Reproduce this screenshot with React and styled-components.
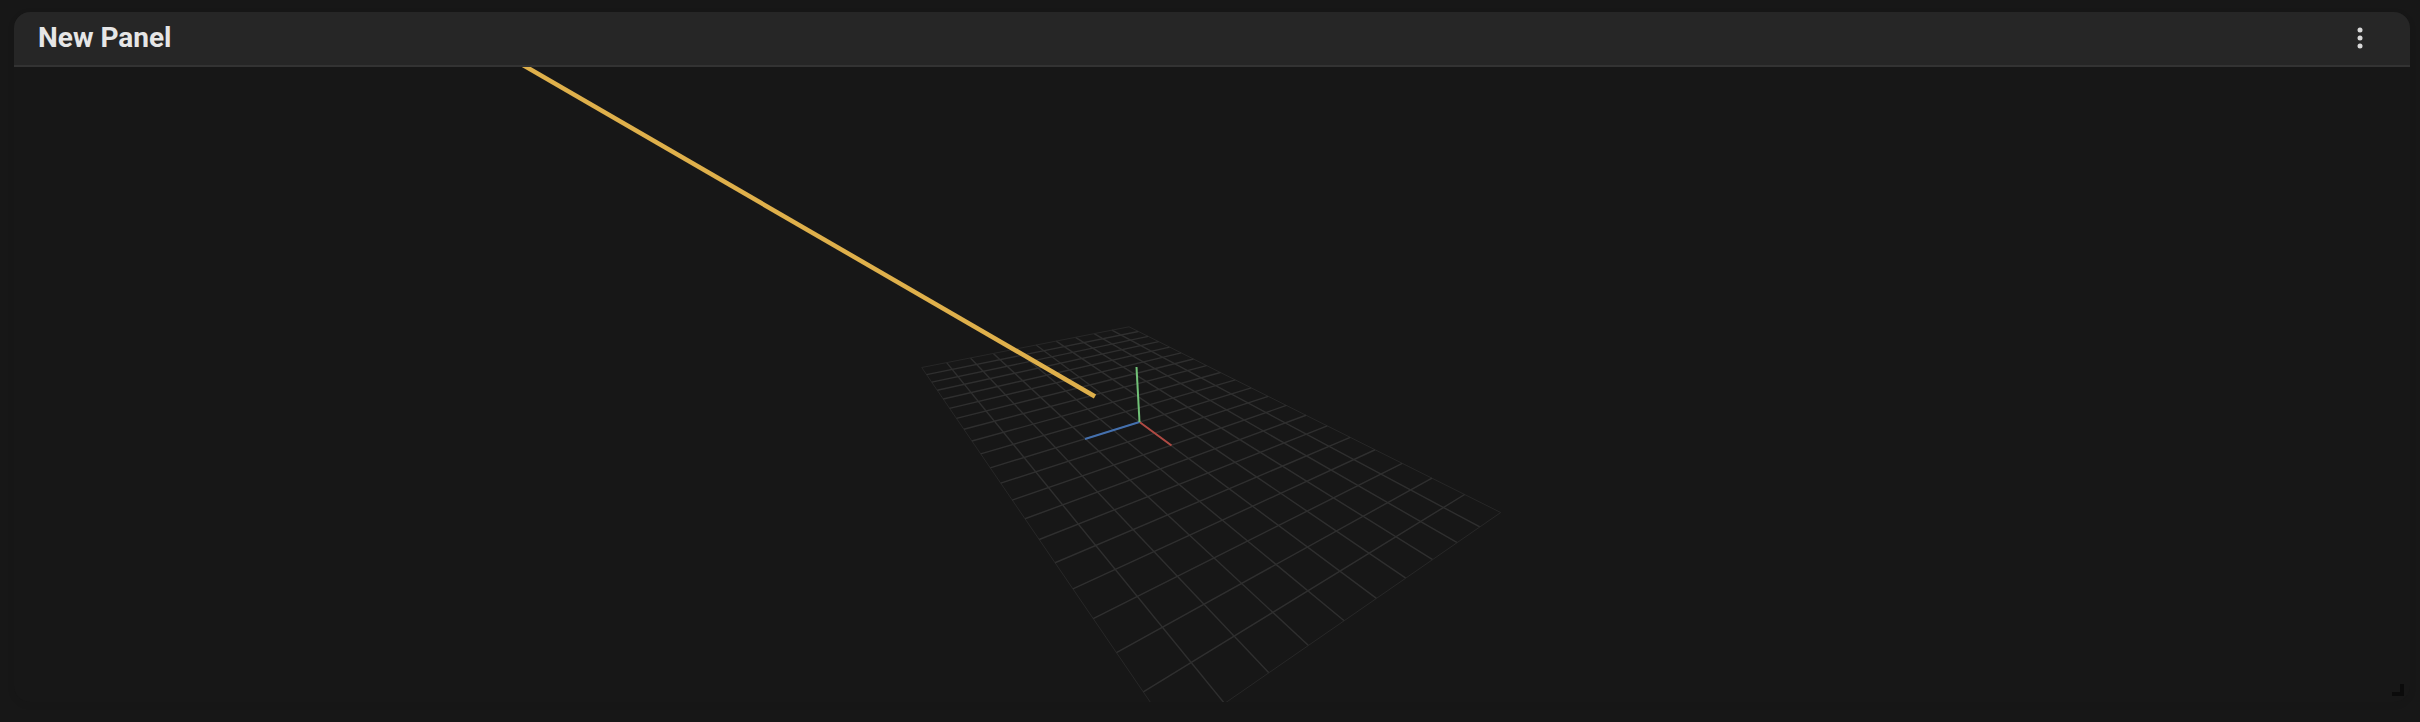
import React from "react";
import styled, { createGlobalStyle } from "styled-components";

const GlobalStyle = createGlobalStyle`
  * {
    box-sizing: border-box;
  }
  body {
    margin: 0;
    background: #171717;
    font-family: Roboto, "Liberation Sans", sans-serif;
  }
`;

const Page = styled.main`
  display: flex;
  min-height: 100vh;
  padding: 12px 10px 20px 14px;
`;

const StyledPanel = styled.section`
  position: relative;
  display: flex;
  flex: 1;
  flex-direction: column;
  min-width: 0;
  overflow: hidden;
  border-radius: 16px;
  background: #171717;
  box-shadow: 0 2px 8px rgba(0, 0, 0, 0.06);
`;

const Header = styled.header`
  display: flex;
  align-items: flex-start;
  justify-content: space-between;
  height: 55px;
  padding: 10px 34px 0 24px;
  background: #262626;
  border-bottom: 2px solid #333333;
`;

const Title = styled.h2`
  margin: 0;
  color: #e6e6e6;
  font-size: 28px;
  font-weight: 700;
  line-height: 32px;
`;

const MenuButton = styled.button`
  display: grid;
  place-items: center;
  width: 32px;
  height: 32px;
  padding: 0;
  border: 0;
  background: none;
  color: #d9d9d9;
  cursor: pointer;
`;

const Viewport = styled.div`
  display: flex;
  flex: 1;
  min-height: 0;
`;

const Scene = styled.svg`
  display: block;
  flex: 1;
  width: 100%;
  min-width: 0;
`;

const ResizeHandle = styled.span`
  position: absolute;
  right: 6px;
  bottom: 6px;
  width: 12px;
  height: 12px;
  border-right: 4px solid #0b0b0b;
  border-bottom: 4px solid #0b0b0b;
  cursor: se-resize;
`;

const COLS = 10;
const ROWS = 20;

// floor corners on screen: far left, far right, near right, near left
const CORNERS = [
  [907.7, 300.5],
  [1115, 259.8],
  [1486.7, 445.5],
  [1160.7, 670.9],
];

// maps the unit square onto the four corners
const makeProjection = ([[x0, y0], [x1, y1], [x2, y2], [x3, y3]]) => {
  const dx1 = x1 - x2;
  const dx2 = x3 - x2;
  const dx3 = x0 - x1 + x2 - x3;
  const dy1 = y1 - y2;
  const dy2 = y3 - y2;
  const dy3 = y0 - y1 + y2 - y3;
  const det = dx1 * dy2 - dx2 * dy1;
  const g = (dx3 * dy2 - dx2 * dy3) / det;
  const h = (dx1 * dy3 - dx3 * dy1) / det;
  return (u, v) => {
    const w = g * u + h * v + 1;
    return [
      ((x1 - x0 + g * x1) * u + (x3 - x0 + h * x3) * v + x0) / w,
      ((y1 - y0 + g * y1) * u + (y3 - y0 + h * y3) * v + y0) / w,
    ];
  };
};

const project = makeProjection(CORNERS);

const GridLine = ({ from, to, edge }) => {
  const [x1, y1] = project(...from);
  const [x2, y2] = project(...to);
  return (
    <line
      x1={x1}
      y1={y1}
      x2={x2}
      y2={y2}
      stroke={edge ? "#272727" : "#2f2f2f"}
      strokeWidth={edge ? 1 : 1.4}
    />
  );
};

const FloorGrid = () => (
  <g>
    {Array.from({ length: COLS + 1 }, (_, i) => (
      <GridLine
        key={`col-${i}`}
        from={[i / COLS, 0]}
        to={[i / COLS, 1]}
        edge={i === 0 || i === COLS}
      />
    ))}
    {Array.from({ length: ROWS + 1 }, (_, i) => (
      <GridLine
        key={`row-${i}`}
        from={[0, i / ROWS]}
        to={[1, i / ROWS]}
        edge={i === 0 || i === ROWS}
      />
    ))}
  </g>
);

const Axes = () => (
  <g strokeWidth="2">
    <line x1="1125.5" y1="355" x2="1157.5" y2="378.5" stroke="#b04a43" />
    <line x1="1125.5" y1="355" x2="1071" y2="372" stroke="#4470ae" />
    <line x1="1125.5" y1="355" x2="1122.5" y2="300" stroke="#72c278" />
  </g>
);

const Panel = ({ title }) => (
  <StyledPanel aria-label={title}>
    <Header>
      <Title>{title}</Title>
      <MenuButton type="button" aria-label="Panel menu">
        <svg width="6" height="24" viewBox="0 0 6 24" fill="currentColor">
          <circle cx="3" cy="4" r="2.5" />
          <circle cx="3" cy="12" r="2.5" />
          <circle cx="3" cy="20" r="2.5" />
        </svg>
      </MenuButton>
    </Header>
    <Viewport>
      <Scene
        viewBox="0 0 2396 635"
        preserveAspectRatio="xMidYMid slice"
        role="img"
        aria-label="3D scene"
      >
        <FloorGrid />
        <line x1="502" y1="-6" x2="1081" y2="329.5" stroke="#dfb04b" strokeWidth="4.5" />
        <Axes />
      </Scene>
    </Viewport>
    <ResizeHandle />
  </StyledPanel>
);

const App = () => (
  <>
    <GlobalStyle />
    <Page>
      <Panel title="New Panel" />
    </Page>
  </>
);

export default App;
